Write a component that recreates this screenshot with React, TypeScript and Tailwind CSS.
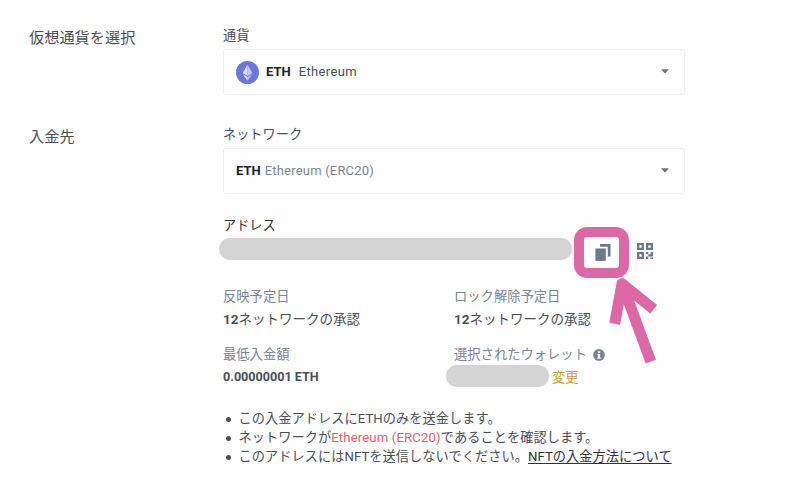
import React from "react";

const EthIcon = () => (
  <svg width="23" height="23" viewBox="0 0 23 23" className="shrink-0">
    <circle cx="11.5" cy="11.5" r="11.5" fill="#6978d8" />
    <path d="M11.5 3.8 6.7 12l4.8 2.9z" fill="#e1e4f7" />
    <path d="M11.5 3.8 16.3 12l-4.8 2.9z" fill="#c3c9ef" />
    <path d="M6.8 13.3l4.7 2.8v3.6z" fill="#e1e4f7" />
    <path d="M16.2 13.3l-4.7 2.8v3.6z" fill="#b9c0ee" />
  </svg>
);

const Caret = () => (
  <svg width="8" height="5" viewBox="0 0 8 5" className="-mt-px ml-auto mr-[15px]" fill="#707276">
    <path d="M1 .3h6q.8 0 .3.7L4.6 4.1q-.6.6-1.2 0L.7 1Q.2.3 1 .3z" />
  </svg>
);

const CopyIcon = () => (
  <svg width="16" height="17" viewBox="0 0 16 17" fill="#6d7888">
    <path d="M5 0h10.5v12.5h-2.7V2.7H5z" />
    <path d="M.4 4.5h10.4v12.4H.4z" />
  </svg>
);

const QrIcon = () => (
  <svg width="16" height="16" viewBox="0 0 16 16" fill="#6d7888">
    <path
      fillRule="evenodd"
      d="M0 0h7v7H0zM2.3 2.3v2.4h2.4V2.3zM9 0h7v7H9zM11.3 2.3v2.4h2.4V2.3zM0 9h7v7H0zM2.3 11.3v2.4h2.4v-2.4z"
    />
    <path d="M9 9h2.3v2.3H9zM13.6 9H16v4.5h-4.7v-2.2h2.3zM9 13.5h2.3V16H9zM13.2 14.6H16V16h-2.8z" />
  </svg>
);

const InfoIcon = () => (
  <svg width="12" height="12" viewBox="0 0 12 12" className="ml-[6px]">
    <circle cx="6" cy="6" r="5.9" fill="#7b8594" />
    <path d="M4.9 2.3h2.2v1.7H4.9zM4.4 5h2.7v3.4h.7v1.3H4.2V8.4H5V6.3h-.6z" fill="#fff" />
  </svg>
);

const Arrow = () => (
  <svg
    width="60"
    height="96"
    viewBox="604 273 60 96"
    className="absolute left-[604px] top-[273px]"
    fill="none"
    stroke="#dd68a6"
    strokeWidth="11"
    strokeLinejoin="round"
  >
    <path d="M614.7 323.7 622 283.7 653.7 309.2" />
    <path d="M623 286 650.8 361.7" />
  </svg>
);

type SelectProps = {
  children: React.ReactNode;
};
const Select = ({ children }: SelectProps) => (
  <div className="flex h-[46px] w-[462px] items-center rounded-[3px] border border-[#eceef3] pl-3 text-[13px]">
    {children}
    <Caret />
  </div>
);

type FieldProps = {
  label: React.ReactNode;
  children: React.ReactNode;
};
const Field = ({ label, children }: FieldProps) => (
  <div>
    <div className="flex h-6 items-center pt-px text-[13.3px] text-[#7b8594]">{label}</div>
    <div className="flex h-[23px] items-center text-[13.5px] text-[#4b4e57]">{children}</div>
  </div>
);

const App = () => {
  return (
    <main className="relative h-[495px] w-[800px] overflow-hidden bg-[#fefefe] pl-[29px] pt-[25px] font-[Roboto,'Noto_Sans_CJK_JP',sans-serif] text-[13.2px] text-[#4b4e57]">
      <section className="flex h-[99px]">
        <h2 className="w-[194px] pt-px text-[15.2px] leading-6">仮想通貨を選択</h2>
        <div>
          <p className="h-6 pt-px leading-5">通貨</p>
          <Select>
            <EthIcon />
            <b className="ml-[7px] font-bold text-[#202329]">ETH</b>
            <span className="ml-2 tracking-[0.35px]">Ethereum</span>
          </Select>
        </div>
      </section>
      <section className="flex">
        <h2 className="w-[194px] pt-px text-[15.2px] leading-6">入金先</h2>
        <div>
          <p className="h-6 pt-px leading-5">ネットワーク</p>
          <Select>
            <b className="font-bold text-[#202329]">ETH</b>
            <span className="ml-1 tracking-[0.2px] text-[#7b8594]">Ethereum (ERC20)</span>
          </Select>
          <p className="mt-[22px] h-5 leading-5 text-[#303238]">アドレス</p>
          <div className="-ml-1 -mt-[9px] flex h-[51px] items-center">
            <div className="-mt-[7px] h-[22px] w-[353px] rounded-full bg-[#d4d4d4]" />
            <div className="ml-[2px] flex h-[51px] w-[55px] items-center justify-center rounded-[13px] border-[10px] border-[#dd68a6] pl-[3px]">
              <CopyIcon />
            </div>
            <div className="-mt-[4px] ml-2">
              <QrIcon />
            </div>
          </div>
          <div className="mt-[6px] grid grid-cols-[231px_231px] gap-y-[11px]">
            <Field label="反映予定日">
              <b className="font-bold">12</b>
              <span>ネットワークの承認</span>
            </Field>
            <Field label="ロック解除予定日">
              <b className="font-bold">12</b>
              <span>ネットワークの承認</span>
            </Field>
            <Field label="最低入金額">
              <b className="text-[12.6px] font-bold">0.00000001 ETH</b>
            </Field>
            <Field
              label={
                <>
                  選択されたウォレット
                  <InfoIcon />
                </>
              }
            >
              <span className="-ml-2 -mt-[3px] mr-[3px] h-[22px] w-[103px] rounded-full bg-[#d4d4d4]" />
              <span className="text-[13.2px] text-[#c99c35]">変更</span>
            </Field>
          </div>
          <ul className="ml-[15.5px] mt-[20px] list-none whitespace-nowrap leading-[19.1px] tracking-[0.06px] [&>li]:relative [&>li]:before:absolute [&>li]:before:-left-[13px] [&>li]:before:top-[8px] [&>li]:before:size-[5px] [&>li]:before:rounded-full [&>li]:before:bg-[#4b4e57] [&>li]:before:content-['']">
            <li>この入金アドレスにETHのみを送金します。</li>
            <li>
              ネットワークが<span className="tracking-[0.12px] text-[#eb5c6c]">Ethereum (ERC20)</span>であることを確認します。
            </li>
            <li>
              このアドレスにはNFTを送信しないでください。
              <a className="text-[#303238] underline underline-offset-2">NFTの入金方法について</a>
            </li>
          </ul>
        </div>
      </section>
      <Arrow />
    </main>
  );
};

export default App;
